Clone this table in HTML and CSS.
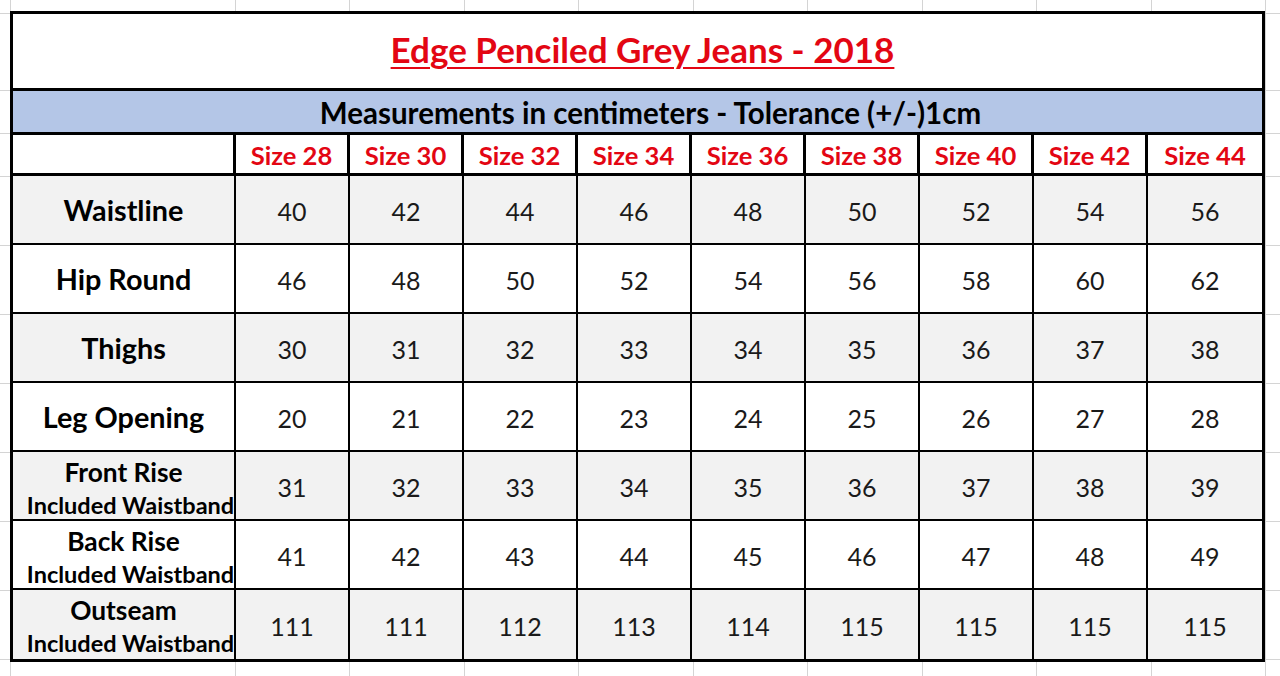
FILE: index.html
```html
<!DOCTYPE html>
<html lang="en">
<head>
<meta charset="utf-8">
<title>Edge Penciled Grey Jeans - 2018</title>
<link rel="stylesheet" href="styles.css">
</head>
<body>
<div class="sheet">
  <div class="chart">
    <div class="title"><span class="title-text">Edge Penciled Grey Jeans - 2018</span></div>
    <div class="subtitle">Measurements in centimeters - Tolerance (+/-)1cm</div>
    <div class="row head">
      <div class="cell label"></div>
      <div class="cell size">Size 28</div>
      <div class="cell size">Size 30</div>
      <div class="cell size">Size 32</div>
      <div class="cell size">Size 34</div>
      <div class="cell size">Size 36</div>
      <div class="cell size">Size 38</div>
      <div class="cell size">Size 40</div>
      <div class="cell size">Size 42</div>
      <div class="cell size">Size 44</div>
    </div>
    <div class="row data shade">
      <div class="cell label"><span class="main">Waistline</span></div>
      <div class="cell num">40</div><div class="cell num">42</div><div class="cell num">44</div><div class="cell num">46</div><div class="cell num">48</div><div class="cell num">50</div><div class="cell num">52</div><div class="cell num">54</div><div class="cell num">56</div>
    </div>
    <div class="row data">
      <div class="cell label"><span class="main">Hip Round</span></div>
      <div class="cell num">46</div><div class="cell num">48</div><div class="cell num">50</div><div class="cell num">52</div><div class="cell num">54</div><div class="cell num">56</div><div class="cell num">58</div><div class="cell num">60</div><div class="cell num">62</div>
    </div>
    <div class="row data shade">
      <div class="cell label"><span class="main">Thighs</span></div>
      <div class="cell num">30</div><div class="cell num">31</div><div class="cell num">32</div><div class="cell num">33</div><div class="cell num">34</div><div class="cell num">35</div><div class="cell num">36</div><div class="cell num">37</div><div class="cell num">38</div>
    </div>
    <div class="row data">
      <div class="cell label"><span class="main">Leg Opening</span></div>
      <div class="cell num">20</div><div class="cell num">21</div><div class="cell num">22</div><div class="cell num">23</div><div class="cell num">24</div><div class="cell num">25</div><div class="cell num">26</div><div class="cell num">27</div><div class="cell num">28</div>
    </div>
    <div class="row data shade">
      <div class="cell label two"><span class="sub-title">Front Rise</span><span class="note">Included Waistband</span></div>
      <div class="cell num">31</div><div class="cell num">32</div><div class="cell num">33</div><div class="cell num">34</div><div class="cell num">35</div><div class="cell num">36</div><div class="cell num">37</div><div class="cell num">38</div><div class="cell num">39</div>
    </div>
    <div class="row data">
      <div class="cell label two"><span class="sub-title">Back Rise</span><span class="note">Included Waistband</span></div>
      <div class="cell num">41</div><div class="cell num">42</div><div class="cell num">43</div><div class="cell num">44</div><div class="cell num">45</div><div class="cell num">46</div><div class="cell num">47</div><div class="cell num">48</div><div class="cell num">49</div>
    </div>
    <div class="row data shade last">
      <div class="cell label two"><span class="sub-title">Outseam</span><span class="note">Included Waistband</span></div>
      <div class="cell num">111</div><div class="cell num">111</div><div class="cell num">112</div><div class="cell num">113</div><div class="cell num">114</div><div class="cell num">115</div><div class="cell num">115</div><div class="cell num">115</div><div class="cell num">115</div>
    </div>
  </div>
</div>
</body>
</html>
```

FILE: styles.css
```css
html, body {
  margin: 0;
  padding: 0;
}

body {
  width: 1280px;
  height: 676px;
  overflow: hidden;
  font-family: "Lato", "Liberation Sans", sans-serif;
  color: #000;
  background-color: #fff;
  background-image:
    repeating-linear-gradient(to right, #d4d4d4 0 1px, transparent 1px 114.444px),
    linear-gradient(to right, transparent 10px, #d4d4d4 10px 11px, transparent 11px),
    repeating-linear-gradient(to bottom, #d4d4d4 0 1px, transparent 1px 69px),
    linear-gradient(to bottom, transparent 13px, #d4d4d4 13px 14px, transparent 14px 90px, #d4d4d4 90px 91px, transparent 91px 133px, #d4d4d4 133px 134px, transparent 134px);
  background-repeat: no-repeat;
  background-position: 235px 0, 0 0, 0 176px, 0 0;
  background-size: 1032px 100%, 12px 100%, 100% 488px, 100% 176px;
}

.sheet {
  padding: 11px 15px 0 10px;
}

.chart {
  box-sizing: border-box;
  width: 1255px;
  height: 651px;
  border: 3px solid #000;
  display: flex;
  flex-direction: column;
}

.title {
  box-sizing: border-box;
  height: 77px;
  padding-left: 10px;
  border-bottom: 3px solid #000;
  background: #fff;
  display: flex;
  align-items: center;
  justify-content: center;
}

.title-text {
  color: #e30613;
  font-weight: 700;
  font-size: 35px;
  text-decoration: underline;
  text-decoration-thickness: 2px;
  text-underline-offset: 4px;
  margin-top: -4px;
}

.subtitle {
  box-sizing: border-box;
  height: 44px;
  padding: 2px 0 0 26px;
  border-bottom: 3px solid #000;
  background: #b4c6e7;
  display: flex;
  align-items: center;
  justify-content: center;
  font-weight: 700;
  font-size: 29.5px;
}

.row {
  display: grid;
  grid-template-columns: 223px repeat(9, 1fr);
}

.cell {
  display: flex;
  align-items: center;
  justify-content: center;
  border-right: 2px solid #000;
  white-space: nowrap;
}

.cell:last-child {
  border-right: none;
}

.head {
  box-sizing: border-box;
  height: 41px;
  border-bottom: 3px solid #000;
  background: #fff;
}

.head .cell {
  border-right-width: 3px;
  padding-top: 2px;
}

.head .cell:last-child {
  border-right: none;
}

.size {
  color: #e30613;
  font-weight: 700;
  font-size: 25.6px;
}

.data {
  box-sizing: border-box;
  height: 69px;
  border-bottom: 2px solid #000;
  background: #fff;
}

.data.last {
  border-bottom: none;
}

.shade {
  background: #f2f2f2;
}

.num {
  font-size: 25px;
  font-weight: 400;
  color: #1a1a1a;
  padding-top: 2px;
}

.label {
  font-weight: 700;
}

.main {
  font-size: 28.8px;
}

.two {
  flex-direction: column;
  justify-content: flex-start;
  padding-top: 5px;
}

.sub-title {
  font-size: 26.3px;
  line-height: 30px;
}

.note {
  font-size: 23.5px;
  line-height: 28px;
  margin-top: 4px;
  padding-left: 14px;
}
```
